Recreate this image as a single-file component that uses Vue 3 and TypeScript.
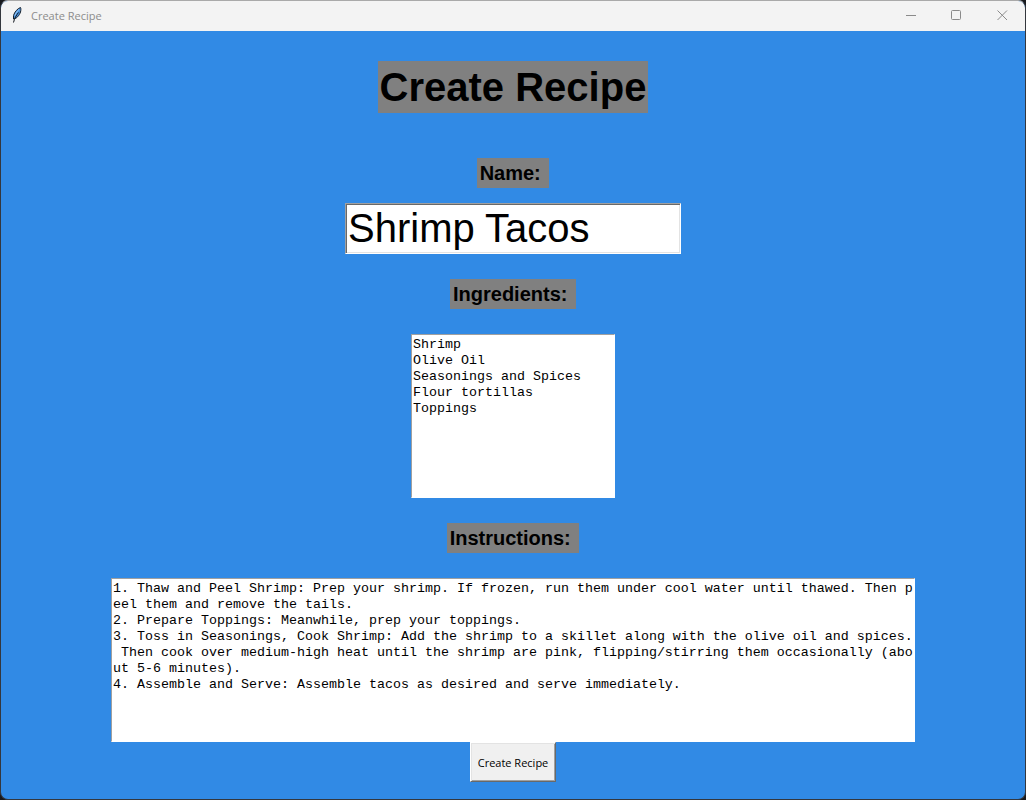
<script setup lang="ts">
import { ref } from 'vue'

const name = ref('Shrimp Tacos')
const ingredients = ref(
  ['Shrimp', 'Olive Oil', 'Seasonings and Spices', 'Flour tortillas', 'Toppings'].join('\n'),
)
const instructions = ref(
  [
    '1. Thaw and Peel Shrimp: Prep your shrimp. If frozen, run them under cool water until thawed. Then peel them and remove the tails.',
    '2. Prepare Toppings: Meanwhile, prep your toppings.',
    '3. Toss in Seasonings, Cook Shrimp: Add the shrimp to a skillet along with the olive oil and spices. Then cook over medium-high heat until the shrimp are pink, flipping/stirring them occasionally (about 5-6 minutes).',
    '4. Assemble and Serve: Assemble tacos as desired and serve immediately.',
  ].join('\n'),
)
</script>

<template>
  <div class="window">
    <header class="titlebar">
      <svg class="feather" width="12" height="18" viewBox="0 0 12 18" aria-hidden="true">
        <path d="M9.500 1.500C6.500 2.500 3.500 6 2.500 9.500L2.500 13C5 13 8.500 9.500 9.500 6C10 4 10 2.500 9.500 1.500Z" fill="#4b94e0" stroke="#16202c" stroke-width="1" />
        <path d="M8 3.500C6.300 5 4.700 7 4 9.500" stroke="#9ccbf5" stroke-width="1" fill="none" />
        <path d="M7.500 6.500C5.500 9 3.500 12 2.500 16.500" stroke="#10151c" stroke-width="1" fill="none" />
      </svg>
      <span class="caption">Create Recipe</span>
      <div class="controls">
        <button type="button" aria-label="Minimize">
          <svg width="11" height="11" viewBox="0 0 11 11"><path d="M1 5.500H11" /></svg>
        </button>
        <button type="button" aria-label="Maximize">
          <svg width="11" height="11" viewBox="0 0 11 11"><rect x="0.500" y="0.500" width="9" height="9" rx="1" /></svg>
        </button>
        <button type="button" aria-label="Close">
          <svg width="11" height="11" viewBox="0 0 11 11"><path d="M0.500 0.500L10 10M10 0.500L0.500 10" /></svg>
        </button>
      </div>
    </header>

    <form class="form" @submit.prevent>
      <h1 class="heading">Create Recipe</h1>
      <label class="label" for="name">{{ 'Name: ' }}</label>
      <input id="name" v-model="name" class="entry" type="text" />
      <label class="label" for="ingredients">{{ 'Ingredients: ' }}</label>
      <textarea id="ingredients" v-model="ingredients" class="text narrow" spellcheck="false"></textarea>
      <label class="label" for="instructions">{{ 'Instructions: ' }}</label>
      <textarea id="instructions" v-model="instructions" class="text wide" spellcheck="false"></textarea>
      <button class="submit" type="submit">Create Recipe</button>
    </form>
  </div>
</template>

<style>
html,
body {
  background: #17191d;
}
</style>

<style scoped>
.window {
  box-sizing: border-box;
  min-height: 100vh;
  display: flex;
  flex-direction: column;
  border: 1px solid #34373d;
  border-top-color: #a9a9a9;
  border-radius: 8px;
  background: #318ae5;
  overflow: hidden;
  font-family: "Liberation Sans", Arial, sans-serif;
  color: #000;
}

.titlebar {
  box-sizing: border-box;
  display: flex;
  align-items: center;
  height: 30px;
  padding: 0 0 2px 10px;
  background: #f3f3f3;
}

.feather {
  margin-right: 8px;
}

.caption {
  flex: 1;
  padding-top: 2px;
  font: 11px/16px "Segoe UI", "Open Sans", sans-serif;
  color: #8c8c8c;
}

.controls {
  display: flex;
  height: 100%;
}

.controls button {
  display: flex;
  align-items: center;
  justify-content: center;
  width: 46px;
  padding: 0;
  border: 0;
  background: transparent;
}

.controls svg {
  fill: none;
  stroke: #8a8a8a;
  stroke-width: 1;
}

.form {
  display: flex;
  flex-direction: column;
  align-items: center;
  padding: 30px 16px 16px;
}

.heading {
  margin: 0 0 45px;
  padding: 0 2px;
  background: #808080;
  font-size: 40px;
  line-height: 52px;
}

.label {
  padding: 0 3px;
  background: #808080;
  font-size: 20px;
  font-weight: bold;
  line-height: 30px;
  white-space: pre;
}

.entry {
  box-sizing: border-box;
  width: 336px;
  max-width: 100%;
  height: 51px;
  margin: 15px 0 25px;
  padding: 0 2px;
  border: 1px solid;
  border-color: #a0a0a0 #fff #fff #a0a0a0;
  border-radius: 0;
  outline: none;
  background: #fff;
  box-shadow: inset 1px 1px #696969, inset -1px -1px #e3e3e3;
  font: 40px "Liberation Sans", Arial, sans-serif;
  color: #000;
}

.text {
  box-sizing: border-box;
  max-width: 100%;
  height: 164px;
  padding: 2px 0 0 1px;
  border: 1px solid;
  border-color: #a0a0a0 #fff #fff #a0a0a0;
  border-radius: 0;
  outline: none;
  resize: none;
  overflow: hidden;
  background: #fff;
  font: 10pt/16px "Liberation Mono", "Courier New", monospace;
  color: #000;
  white-space: break-spaces;
  word-break: break-all;
  line-break: anywhere;
}

.narrow {
  width: 204px;
  margin: 25px 0;
}

.wide {
  width: 804px;
  margin: 25px 0 0;
}

.submit {
  box-sizing: border-box;
  width: 86px;
  height: 40px;
  padding: 1px 0 0;
  border: 1px solid;
  border-color: #fff #696969 #696969 #fff;
  background: #f0f0f0;
  box-shadow: inset 1px 1px #e3e3e3, inset -1px -1px #a0a0a0;
  font: 11px/16px "Segoe UI", "Open Sans", sans-serif;
  color: #000;
  white-space: nowrap;
}
</style>
